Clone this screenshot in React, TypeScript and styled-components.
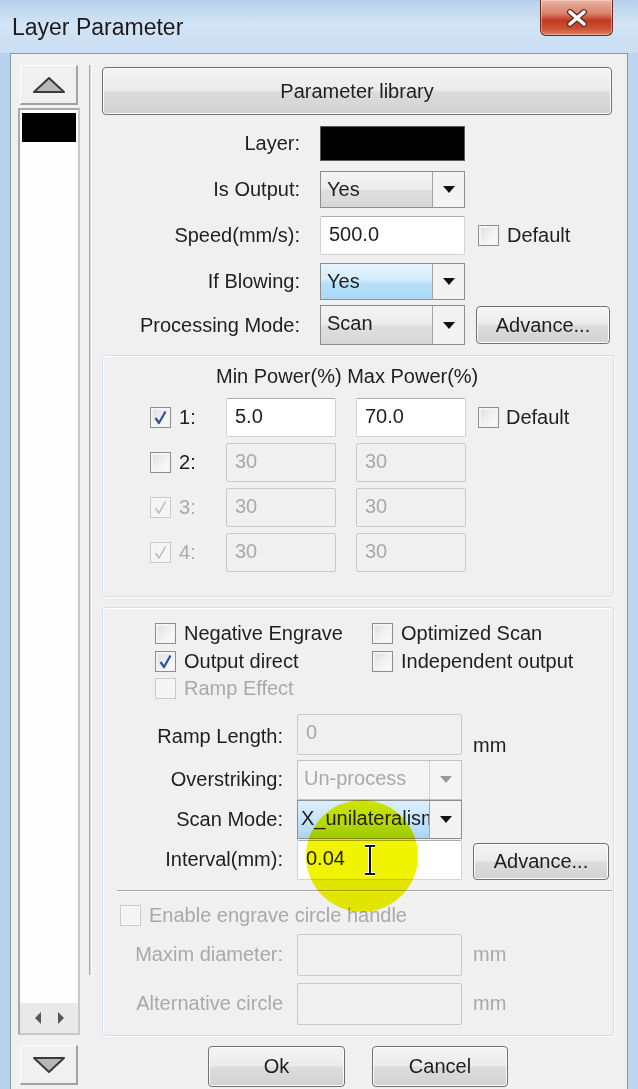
import React from 'react';
import styled, { createGlobalStyle, css } from 'styled-components';

const GlobalStyle = createGlobalStyle`
  html, body {
    margin: 0;
    padding: 0;
  }
  body {
    background: #c4daf0;
    font-family: "Liberation Sans", Arial, sans-serif;
    font-size: 20px;
    color: #1e1e1e;
  }
  * {
    box-sizing: border-box;
  }
`;

const Window = styled.div`
  position: relative;
  width: 638px;
  height: 1089px;
  display: flex;
  flex-direction: column;
  overflow: hidden;
  background: linear-gradient(90deg, #b8d1eb 0%, #cadff3 50%, #bdd6ee 100%);
`;

const TitleBar = styled.div`
  height: 53px;
  flex-shrink: 0;
  display: flex;
  align-items: flex-start;
  justify-content: space-between;
  padding: 0 25px 0 12px;
  background: linear-gradient(180deg, #b6d0ea 0%, #d2e4f5 45%, #cadef2 100%);
`;

const Title = styled.div`
  margin-top: 14px;
  font-size: 23px;
  color: #1b1b1b;
`;

const CloseButton = styled.div`
  width: 73px;
  height: 36px;
  display: flex;
  align-items: center;
  justify-content: center;
  border: 1px solid #6e2b1f;
  border-top: none;
  border-radius: 0 0 6px 6px;
  background: linear-gradient(180deg, #ebb3a3 0%, #d9846d 38%, #c13a22 58%, #cc5134 82%, #de8565 100%);
  box-shadow: inset 0 0 0 1px rgba(255, 255, 255, 0.35);
`;

const Client = styled.div`
  flex: 1;
  display: flex;
  margin: 0 10px;
  padding: 11px 0 0 7px;
  background: #f0f0f0;
  border: 1px solid #8696a6;
  border-bottom: none;
`;

/* ---------- left layer list ---------- */

const LeftPane = styled.div`
  width: 62px;
  flex-shrink: 0;
  display: flex;
  flex-direction: column;
`;

const ArrowButton = styled.div`
  height: 40px;
  margin: 0 2px;
  display: flex;
  align-items: center;
  justify-content: center;
  background: #f0f0f0;
  border-top: 1px solid #fdfdfd;
  border-left: 1px solid #fdfdfd;
  border-right: 2px solid #a2a2a2;
  border-bottom: 2px solid #a2a2a2;
`;

const ListBox = styled.div`
  height: 927px;
  margin: 3px 0 10px;
  display: flex;
  flex-direction: column;
  background: #fdfdfd;
  border: 2px solid #a9a9a9;
  border-right-color: #c8c8c8;
  border-bottom-color: #c8c8c8;
`;

const LayerItem = styled.div<{ $color: string }>`
  height: 29px;
  margin: 3px 2px 0;
  background: ${p => p.$color};
`;

const HScroll = styled.div`
  margin-top: auto;
  height: 30px;
  display: flex;
  align-items: center;
  justify-content: space-around;
  padding: 0 6px;
  background: #e9e9e9;
`;

const Splitter = styled.div`
  width: 3px;
  height: 910px;
  margin: 0 10px 0 9px;
  border-left: 1px solid #a8a8a8;
  border-right: 1px solid #fdfdfd;
  background: #d4d4d4;
`;

/* ---------- right form ---------- */

const RightPane = styled.div`
  width: 512px;
  padding-top: 2px;
  display: flex;
  flex-direction: column;
`;

const Button = styled.button<{ $w: number; $h: number }>`
  width: ${p => p.$w}px;
  height: ${p => p.$h}px;
  padding: 0;
  font: inherit;
  color: #1e1e1e;
  border: 1px solid #707070;
  border-radius: 4px;
  background: linear-gradient(180deg, #f4f4f4 0%, #ebebeb 48%, #dcdcdc 52%, #d2d2d2 100%);
  box-shadow: inset 0 0 0 1px #fbfbfb;
`;

const TopForm = styled.div`
  margin-top: 5px;
  display: grid;
  grid-template-columns: 218px 145px auto;
  grid-template-rows: 46px 47px 45px 46px 42px;
  align-items: center;
`;

const Label = styled.div<{ $disabled?: boolean; $pad?: number }>`
  text-align: right;
  white-space: nowrap;
  padding-right: ${p => p.$pad ?? 20}px;
  color: ${p => (p.$disabled ? '#a9a9a9' : '#1e1e1e')};
`;

const Extra = styled.div<{ $pad?: number; $end?: boolean }>`
  display: flex;
  align-items: center;
  padding-left: ${p => p.$pad ?? 11}px;
  align-self: ${p => (p.$end ? 'end' : 'center')};
`;

const Swatch = styled.div`
  width: 145px;
  height: 35px;
  background: #000;
  border: 1px solid #5a5a5a;
`;

const TextBox = styled.div<{ $w: number; $h: number; $disabled?: boolean }>`
  width: ${p => p.$w}px;
  height: ${p => p.$h}px;
  padding: 6px 0 0 8px;
  white-space: nowrap;
  border: 1px solid #cfd3d8;
  border-top-color: #abadb3;
  border-radius: 2px;
  ${p =>
    p.$disabled
      ? css`
          background: #f0f0f0;
          color: #a9a9a9;
          border-color: #c9c9c9;
        `
      : css`
          background: #fff;
          color: #1e1e1e;
        `}
`;

type ComboKind = 'normal' | 'hot' | 'selected' | 'disabled';

const ComboBox = styled.div<{ $w: number; $h: number; $kind: ComboKind }>`
  width: ${p => p.$w}px;
  height: ${p => p.$h}px;
  display: flex;
  border: 1px solid ${p => (p.$kind === 'disabled' ? '#c3c3c3' : '#8e8e8e')};
  background: ${p => (p.$kind === 'disabled' ? '#f4f4f4' : '#f3f3f3')};
`;

const ComboValue = styled.div<{ $kind: ComboKind }>`
  flex: 1;
  overflow: hidden;
  white-space: nowrap;
  padding: 6px 0 0 6px;
  border-right: 1px solid ${p => (p.$kind === 'disabled' ? '#d0d0d0' : '#a5a5a5')};
  ${p => {
    switch (p.$kind) {
      case 'hot':
        return css`
          background: linear-gradient(180deg, #e6f4fd 0%, #d4edfc 45%, #b7e0f9 55%, #a9d8f6 100%);
        `;
      case 'selected':
        return css`
          background: linear-gradient(180deg, #dcefff 0%, #c6e5fb 50%, #a9d4f3 100%);
          padding-left: 3px;
        `;
      case 'disabled':
        return css`
          background: #f4f4f4;
          color: #a9a9a9;
        `;
      default:
        return css`
          background: linear-gradient(180deg, #f4f4f4 0%, #ececec 48%, #dfdfdf 52%, #d7d7d7 100%);
        `;
    }
  }}
`;

const ComboArrow = styled.div`
  width: 31px;
  display: flex;
  align-items: center;
  justify-content: center;
`;

const GroupBox = styled.div<{ $mt: number }>`
  margin-top: ${p => p.$mt}px;
  border: 1px solid #d5dfe5;
  border-radius: 3px;
  box-shadow: inset 1px 1px 0 #fdfdfd, 1px 1px 0 #fdfdfd;
`;

const PowerGrid = styled.div`
  display: grid;
  grid-template-columns: 56px 110px 110px auto;
  grid-auto-rows: 39px;
  grid-template-rows: auto;
  column-gap: 20px;
  row-gap: 6px;
  align-items: center;
  padding: 9px 0 24px 47px;
`;

const PowerHeader = styled.div`
  grid-column: 2 / 5;
  margin: 0 0 5px -10px;
  white-space: nowrap;
  height: 22px;
  line-height: 22px;
`;

const ChannelCell = styled.div<{ $disabled?: boolean }>`
  display: flex;
  align-items: center;
  gap: 8px;
  color: ${p => (p.$disabled ? '#a9a9a9' : '#1e1e1e')};
`;

const DefaultCell = styled.div`
  display: flex;
  align-items: center;
  gap: 7px;
  margin-left: -8px;
`;

const OptionsGroup = styled(GroupBox)`
  padding: 12px 1px 10px 0;
`;

const CheckGrid = styled.div`
  display: grid;
  grid-template-columns: 217px auto;
  grid-auto-rows: 27.5px;
  align-items: center;
  padding-left: 52px;
`;

const CheckItem = styled.label<{ $disabled?: boolean; $pad?: number; $mt?: number }>`
  display: flex;
  align-items: center;
  gap: 8px;
  white-space: nowrap;
  padding-left: ${p => p.$pad ?? 0}px;
  margin-top: ${p => p.$mt ?? 0}px;
  color: ${p => (p.$disabled ? '#a9a9a9' : '#1e1e1e')};
`;

const BottomForm = styled.div<{ $mt: number; $rows: string; $gap?: number }>`
  margin-top: ${p => p.$mt}px;
  display: grid;
  grid-template-columns: 194px 165px auto;
  grid-template-rows: ${p => p.$rows};
  row-gap: ${p => p.$gap ?? 0}px;
  align-items: center;
`;

const Unit = styled.div<{ $disabled?: boolean; $end?: boolean }>`
  padding-left: 11px;
  align-self: ${p => (p.$end ? 'end' : 'center')};
  margin-bottom: ${p => (p.$end ? 3 : 0)}px;
  color: ${p => (p.$disabled ? '#a9a9a9' : '#1e1e1e')};
`;

const StartCell = styled.div`
  align-self: start;
`;

const Separator = styled.div`
  height: 2px;
  margin: 10px 0 0 14px;
  border-top: 1px solid #a6a6a6;
  border-bottom: 1px solid #fdfdfd;
`;

const FooterRow = styled.div`
  margin-top: 10px;
  display: flex;
  justify-content: center;
  gap: 27px;
`;

const BoxWrap = styled.span<{ $disabled?: boolean }>`
  width: 21px;
  height: 21px;
  flex-shrink: 0;
  display: inline-flex;
  align-items: center;
  justify-content: center;
  border: 1px solid ${p => (p.$disabled ? '#cacaca' : '#8f8f8f')};
  background: ${p =>
    p.$disabled ? '#f4f4f4' : 'linear-gradient(135deg, #dcdcdc 0%, #f2f2f2 55%, #fdfdfd 100%)'};
  box-shadow: inset 0 0 0 2px ${p => (p.$disabled ? '#f6f6f6' : '#f4f4f4')};
`;

/* ---------- overlay: mouse highlight of the screen recording ---------- */

const Highlight = styled.div`
  position: absolute;
  left: 306px;
  top: 800px;
  width: 112px;
  height: 112px;
  border-radius: 50%;
  background: #f0f400;
  mix-blend-mode: multiply;
  pointer-events: none;
`;

const Cursor = styled.svg`
  position: absolute;
  left: 362px;
  top: 844px;
`;

const Check: React.FC<{ checked?: boolean; disabled?: boolean }> = ({ checked, disabled }) => (
  <BoxWrap $disabled={disabled}>
    {checked && (
      <svg width="15" height="15" viewBox="0 0 15 15">
        <path
          d="M2.5 8 L6 13 L12.5 1.5"
          fill="none"
          stroke={disabled ? '#b9b9b9' : '#33509a'}
          strokeWidth={disabled ? 1.4 : 2.2}
          strokeLinejoin="round"
        />
      </svg>
    )}
  </BoxWrap>
);

const DropArrow: React.FC<{ disabled?: boolean }> = ({ disabled }) => (
  <svg width="12" height="7" viewBox="0 0 12 7">
    <path d="M0 0 H12 L6 7 Z" fill={disabled ? '#9a9a9a' : '#111'} />
  </svg>
);

const Combo: React.FC<{ value: string; w: number; h: number; kind?: ComboKind }> = ({
  value,
  w,
  h,
  kind = 'normal',
}) => (
  <ComboBox $w={w} $h={h} $kind={kind}>
    <ComboValue $kind={kind}>{value}</ComboValue>
    <ComboArrow>
      <DropArrow disabled={kind === 'disabled'} />
    </ComboArrow>
  </ComboBox>
);

const Triangle: React.FC<{ down?: boolean }> = ({ down }) => (
  <svg width="34" height="18" viewBox="0 0 34 18">
    <path
      d={down ? 'M2 2 H32 L17 16 Z' : 'M2 16 H32 L17 2 Z'}
      fill="#b8b8b8"
      stroke="#3a3a3a"
      strokeWidth="2"
      strokeLinejoin="round"
    />
  </svg>
);

const channels = [
  { n: 1, on: true, dis: false, min: '5.0', max: '70.0', edit: true },
  { n: 2, on: false, dis: false, min: '30', max: '30', edit: false },
  { n: 3, on: true, dis: true, min: '30', max: '30', edit: false },
  { n: 4, on: true, dis: true, min: '30', max: '30', edit: false },
];

const App: React.FC = () => (
  <Window>
    <GlobalStyle />
    <TitleBar>
      <Title>Layer Parameter</Title>
      <CloseButton>
        <svg width="22" height="18" viewBox="0 0 22 18">
          <path d="M4 3 L18 15 M18 3 L4 15" stroke="#5a2a22" strokeWidth="6" strokeLinecap="round" />
          <path d="M4 3 L18 15 M18 3 L4 15" stroke="#fff" strokeWidth="3.6" strokeLinecap="round" />
        </svg>
      </CloseButton>
    </TitleBar>

    <Client>
      <LeftPane>
        <ArrowButton>
          <Triangle />
        </ArrowButton>
        <ListBox>
          <LayerItem $color="#000" />
          <HScroll>
            <svg width="8" height="12" viewBox="0 0 8 12">
              <path d="M7 0 V12 L1 6 Z" fill="#555" />
            </svg>
            <svg width="8" height="12" viewBox="0 0 8 12">
              <path d="M1 0 V12 L7 6 Z" fill="#555" />
            </svg>
          </HScroll>
        </ListBox>
        <ArrowButton>
          <Triangle down />
        </ArrowButton>
      </LeftPane>

      <Splitter />

      <RightPane>
        <Button $w={510} $h={48}>Parameter library</Button>

        <TopForm>
          <Label>Layer:</Label>
          <Swatch />
          <span />

          <Label>Is Output:</Label>
          <Combo value="Yes" w={145} h={37} />
          <span />

          <Label>Speed(mm/s):</Label>
          <TextBox $w={145} $h={39}>500.0</TextBox>
          <Extra $pad={13}>
            <CheckItem>
              <Check />
              Default
            </CheckItem>
          </Extra>

          <Label>If Blowing:</Label>
          <Combo value="Yes" w={145} h={37} kind="hot" />
          <span />

          <Label>Processing Mode:</Label>
          <Combo value="Scan" w={145} h={40} />
          <Extra>
            <Button $w={134} $h={38}>Advance...</Button>
          </Extra>
        </TopForm>

        <GroupBox $mt={9}>
          <PowerGrid>
            <PowerHeader>Min Power(%) Max Power(%)</PowerHeader>
            {channels.map(c => (
              <React.Fragment key={c.n}>
                <ChannelCell $disabled={c.dis}>
                  <Check checked={c.on} disabled={c.dis} />
                  {c.n}:
                </ChannelCell>
                <TextBox $w={110} $h={39} $disabled={!c.edit}>{c.min}</TextBox>
                <TextBox $w={110} $h={39} $disabled={!c.edit}>{c.max}</TextBox>
                {c.n === 1 ? (
                  <DefaultCell>
                    <Check />
                    Default
                  </DefaultCell>
                ) : (
                  <span />
                )}
              </React.Fragment>
            ))}
          </PowerGrid>
        </GroupBox>

        <OptionsGroup $mt={10}>
          <CheckGrid>
            <CheckItem>
              <Check />
              Negative Engrave
            </CheckItem>
            <CheckItem>
              <Check />
              Optimized Scan
            </CheckItem>
            <CheckItem>
              <Check checked />
              Output direct
            </CheckItem>
            <CheckItem>
              <Check />
              Independent output
            </CheckItem>
            <CheckItem $disabled>
              <Check disabled />
              Ramp Effect
            </CheckItem>
          </CheckGrid>

          <BottomForm $mt={11} $rows="46px 40px 40px 40px">
            <Label $pad={14}>Ramp Length:</Label>
            <StartCell>
              <TextBox $w={165} $h={41} $disabled>0</TextBox>
            </StartCell>
            <Unit $end>mm</Unit>

            <Label $pad={14}>Overstriking:</Label>
            <Combo value="Un-process" w={165} h={40} kind="disabled" />
            <span />

            <Label $pad={14}>Scan Mode:</Label>
            <Combo value="X_unilateralism" w={165} h={39} kind="selected" />
            <span />

            <Label $pad={14}>Interval(mm):</Label>
            <TextBox $w={165} $h={40}>0.04</TextBox>
            <Extra $end>
              <Button $w={136} $h={37}>Advance...</Button>
            </Extra>
          </BottomForm>

          <Separator />

          <CheckItem $disabled $pad={17} $mt={12}>
            <Check disabled />
            Enable engrave circle handle
          </CheckItem>

          <BottomForm $mt={7} $rows="42px 42px" $gap={7}>
            <Label $disabled $pad={14}>Maxim diameter:</Label>
            <TextBox $w={165} $h={42} $disabled />
            <Unit $disabled>mm</Unit>

            <Label $disabled $pad={14}>Alternative circle</Label>
            <TextBox $w={165} $h={42} $disabled />
            <Unit $disabled>mm</Unit>
          </BottomForm>
        </OptionsGroup>

        <FooterRow>
          <Button $w={137} $h={41}>Ok</Button>
          <Button $w={136} $h={41}>Cancel</Button>
        </FooterRow>
      </RightPane>
    </Client>

    <Highlight />
    <Cursor width="16" height="32" viewBox="0 0 16 32">
      <path d="M3 2 H13 M8 2 V30 M3 30 H13" stroke="#fff" strokeWidth="4" fill="none" />
      <path d="M3 2 H13 M8 2 V30 M3 30 H13" stroke="#111" strokeWidth="2" fill="none" />
    </Cursor>
  </Window>
);

export default App;
